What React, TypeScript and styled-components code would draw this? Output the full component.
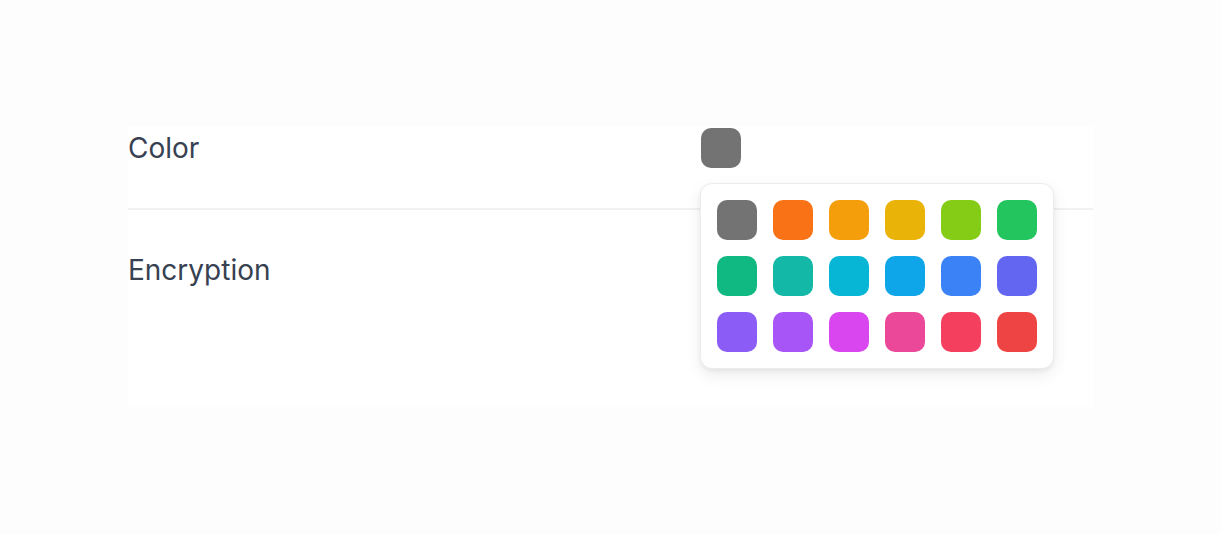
import React, { useState } from 'react';
import styled, { createGlobalStyle } from 'styled-components';

const GlobalStyle = createGlobalStyle`
    html, body {
        margin: 0;
        padding: 0;
        background: #fdfdfd;
        font-family: Inter, "Noto Sans", sans-serif;
        -webkit-font-smoothing: antialiased;
    }
`;

const Page = styled.div`
    width: 1221px;
    height: 534px;
    overflow: hidden;
    padding: 126px 128px 0 128px;
    box-sizing: border-box;
`;

const Settings = styled.div`
    width: 965px;
    height: 281px;
    background: #ffffff;
    display: flex;
    flex-direction: column;
`;

const Row = styled.div<{ divider?: boolean; first?: boolean }>`
    display: flex;
    align-items: center;
    padding: ${p => p.first ? "2px 0 40px" : "40px 0"};
    border-bottom: ${p => p.divider ? "2px solid #f1f1f2" : "none"};
`;

const Label = styled.div`
    width: 573px;
    font-size: 28px;
    line-height: 40px;
    font-weight: 400;
    color: #374151;
`;

const Value = styled.div`
    position: relative;
    display: flex;
    align-items: center;
`;

const Swatch = styled.button<{ color: string }>`
    width: 40px;
    height: 40px;
    border: none;
    padding: 0;
    border-radius: 10px;
    background-color: ${p => p.color};
    cursor: pointer;
    display: block;
`;

const Popover = styled.div`
    position: absolute;
    top: 55px;
    left: -1px;
    z-index: 10;
    background: #ffffff;
    border: 1px solid #ececec;
    border-radius: 12px;
    padding: 16px;
    box-shadow: 0 6px 16px rgba(0, 0, 0, 0.08), 0 2px 4px rgba(0, 0, 0, 0.05);
    display: grid;
    grid-template-columns: repeat(6, 40px);
    gap: 16px;
`;

const COLORS = [
    "#737373", "#f97316", "#f59e0b", "#eab308", "#84cc16", "#22c55e",
    "#10b981", "#14b8a6", "#06b6d4", "#0ea5e9", "#3b82f6", "#6366f1",
    "#8b5cf6", "#a855f7", "#d946ef", "#ec4899", "#f43f5e", "#ef4444",
];

const App = () => {
    const [color, setColor] = useState(COLORS[0]);
    const [open, setOpen] = useState(true);

    return (
        <Page>
            <GlobalStyle />
            <Settings>
                <Row divider first>
                    <Label>Color</Label>
                    <Value>
                        <Swatch color={color} onClick={() => setOpen(!open)} />
                        {open && (
                            <Popover>
                                {COLORS.map(c => (
                                    <Swatch key={c} color={c} onClick={() => setColor(c)} />
                                ))}
                            </Popover>
                        )}
                    </Value>
                </Row>
                <Row>
                    <Label>Encryption</Label>
                </Row>
            </Settings>
        </Page>
    );
};

export default App;
